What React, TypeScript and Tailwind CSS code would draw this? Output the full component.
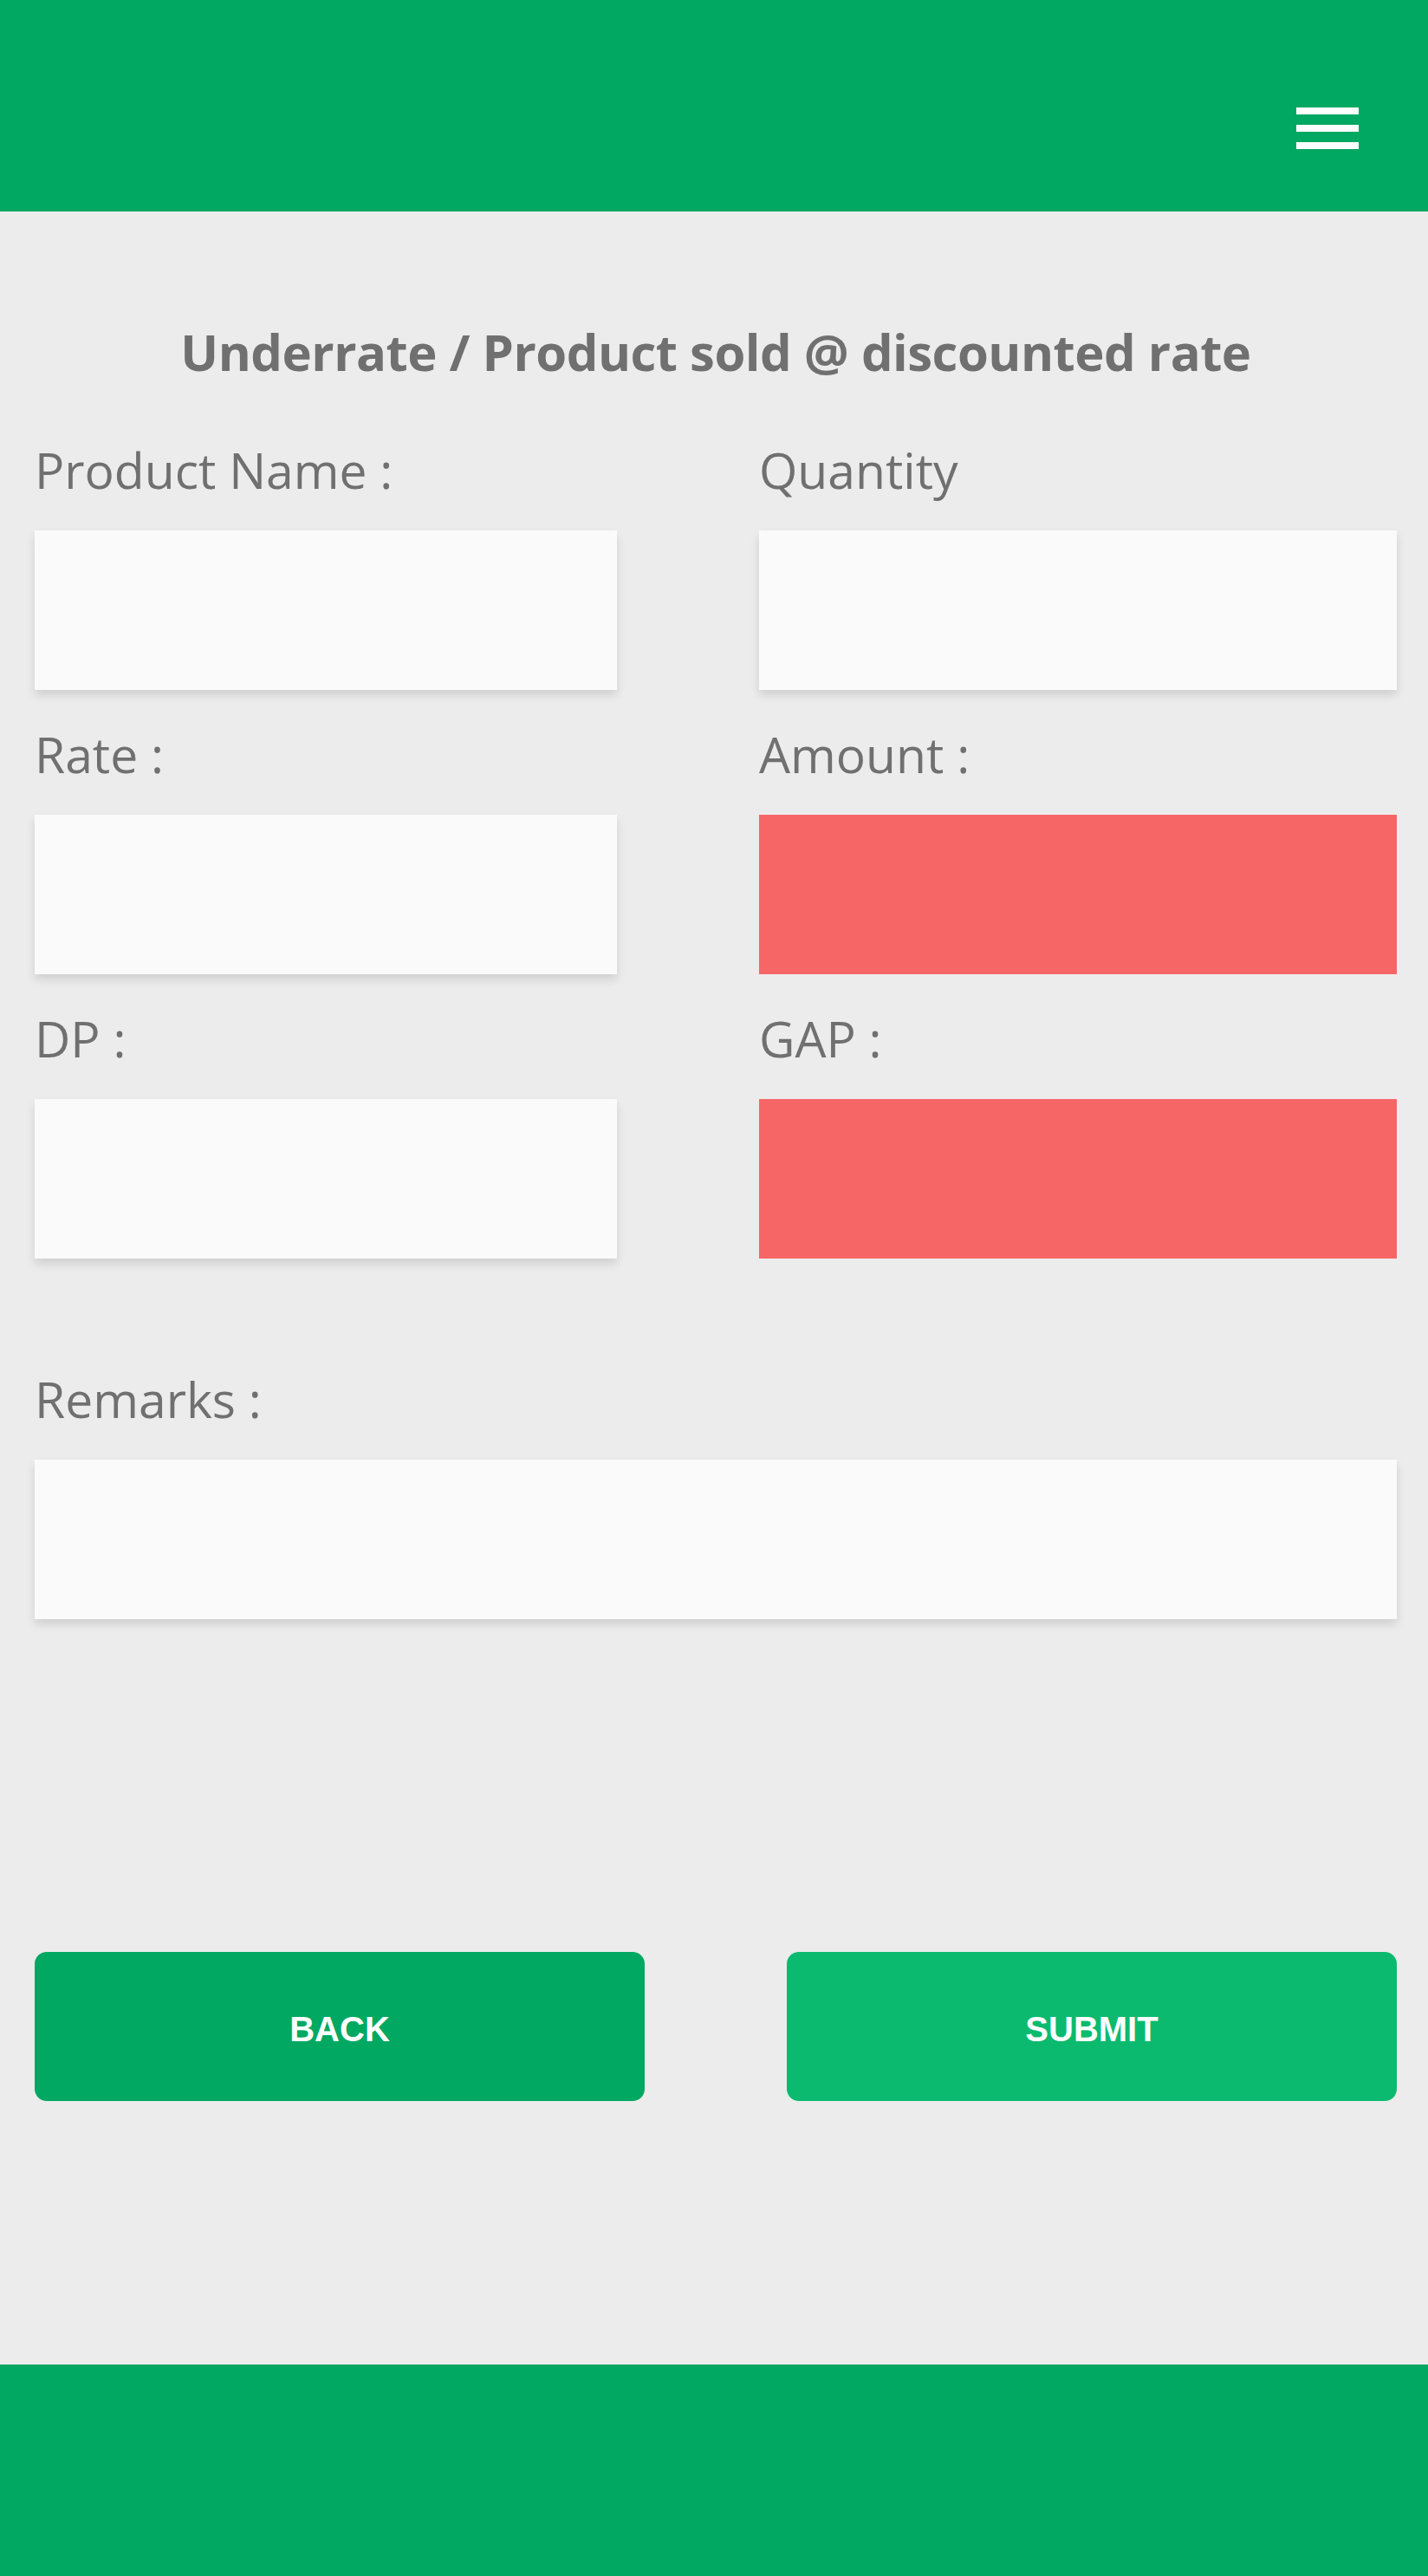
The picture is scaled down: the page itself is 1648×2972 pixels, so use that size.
export default function App() {
  const field = "bg-[#fafafa] h-[184px] shadow-[0_6px_10px_rgba(0,0,0,0.12)]";
  const red = "bg-[#f76666] h-[184px]";
  const label = "text-[57px] leading-[79px] text-[#707070] mb-[30px] whitespace-nowrap";

  return (
    <div className="w-[1648px] min-h-[2972px] bg-[#ececec] flex flex-col font-['Open_Sans',sans-serif]">
      <header className="h-[244px] bg-[#00a862] flex items-start justify-end pr-[80px] pt-[124px] shrink-0">
        <div className="flex flex-col gap-[12px] w-[72px]">
          <span className="block h-[8px] bg-white" />
          <span className="block h-[8px] bg-white" />
          <span className="block h-[8px] bg-white" />
        </div>
      </header>

      <main className="flex-1 pl-[40px] pr-[36px] pt-[121px]">
        <h1 className="text-center text-[58px] leading-[82px] font-bold text-[#707070] tracking-[-0.5px]">
          Underrate / Product sold @ discounted rate
        </h1>

        <div className="grid grid-cols-[672px_736px] justify-between gap-y-[35px] mt-[56px]">
          <div>
            <div className={label}>Product Name :</div>
            <div className={field} />
          </div>
          <div>
            <div className={label}>Quantity</div>
            <div className={field} />
          </div>
          <div>
            <div className={label}>Rate :</div>
            <div className={field} />
          </div>
          <div>
            <div className={label}>Amount :</div>
            <div className={red} />
          </div>
          <div>
            <div className={label}>DP :</div>
            <div className={field} />
          </div>
          <div>
            <div className={label}>GAP :</div>
            <div className={red} />
          </div>
        </div>

        <div className="mt-[123px]">
          <div className={label}>Remarks :</div>
          <div className={field} />
        </div>

        <div className="flex justify-between mt-[384px] font-['Liberation_Sans',Arial,sans-serif]">
          <button className="w-[704px] h-[172px] pt-[6px] rounded-[14px] bg-[#00a862] text-white text-[40px] font-bold">
            BACK
          </button>
          <button className="w-[704px] h-[172px] pt-[6px] rounded-[14px] bg-[#0bba6e] text-white text-[40px] font-bold">
            SUBMIT
          </button>
        </div>
      </main>

      <footer className="h-[244px] bg-[#00a862] shrink-0" />
    </div>
  );
}
